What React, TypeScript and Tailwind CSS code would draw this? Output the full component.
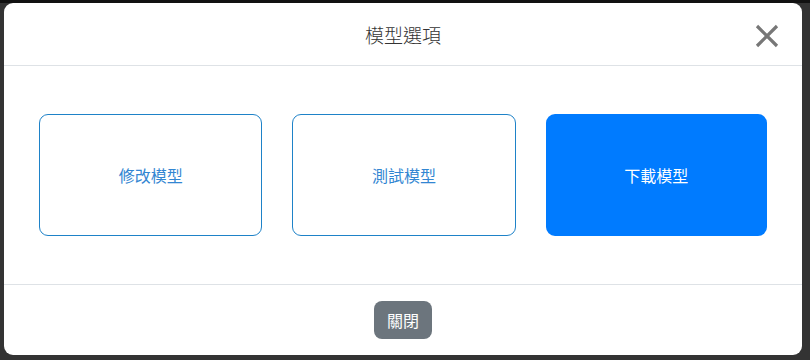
export default function App() {
  const options = [
    { label: "修改模型", primary: false },
    { label: "測試模型", primary: false },
    { label: "下載模型", primary: true },
  ];

  return (
    <div
      className="w-[810px] h-[360px] bg-[#333333] flex flex-col"
      style={{ fontFamily: '"Noto Sans CJK TC", "Noto Sans", sans-serif' }}
    >
      <div className="h-[3px] bg-[#111111]" />
      <div className="flex-1 flex px-[4px] pb-[5px] pr-[8px]">
        <div className="flex-1 bg-white rounded-[9px] flex flex-col overflow-hidden">
          {/* Header */}
          <div className="h-[63px] border-b border-[#dee2e6] flex items-center justify-center relative">
            <h2 className="text-[19px] font-light text-[#333333] leading-none">模型選項</h2>
            <button className="absolute right-[22px] top-[20px] w-[26px] h-[26px] flex items-center justify-center">
              <svg width="24" height="24" viewBox="0 0 24 24">
                <path
                  d="M2 2 L22 22 M22 2 L2 22"
                  stroke="#777777"
                  strokeWidth="3.2"
                  strokeLinecap="butt"
                />
              </svg>
            </button>
          </div>

          {/* Body */}
          <div className="h-[219px] border-b border-[#dee2e6] flex items-center gap-[30px] px-[35px]">
            {options.map((o) => (
              <button
                key={o.label}
                className={
                  o.primary
                    ? "flex-1 h-[122px] rounded-[9px] bg-[#007bff] text-white text-[16px] flex items-center justify-center"
                    : "flex-1 h-[122px] rounded-[9px] border border-[#1e82c8] text-[#3286d2] text-[16px] flex items-center justify-center"
                }
              >
                {o.label}
              </button>
            ))}
          </div>

          {/* Footer */}
          <div className="flex-1 flex items-center justify-center">
            <button className="w-[58px] h-[38px] rounded-[8px] bg-[#6c757d] text-white text-[16px]">
              關閉
            </button>
          </div>
        </div>
      </div>
    </div>
  );
}
